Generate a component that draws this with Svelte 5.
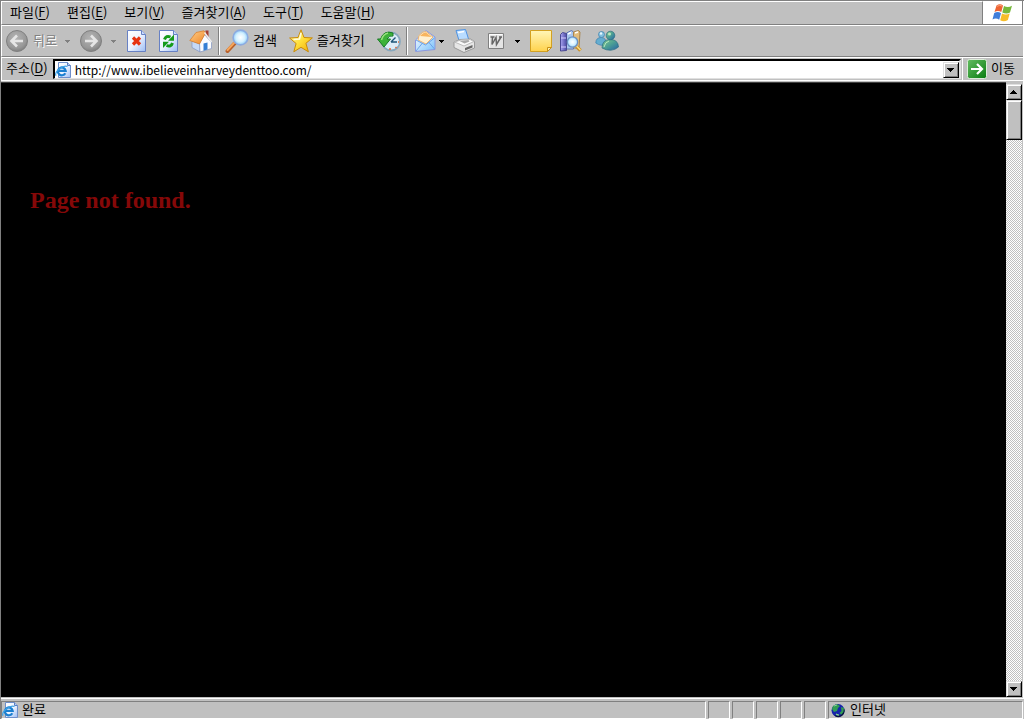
<script>
  const menus = [
    ['파일', 'F'], ['편집', 'E'], ['보기', 'V'],
    ['즐겨찾기', 'A'], ['도구', 'T'], ['도움말', 'H']
  ];
  let url = $state('http://www.ibelieveinharveydenttoo.com/');
</script>

{#snippet caret()}
  <svg class="caret" viewBox="0 0 6 3" aria-hidden="true" shape-rendering="crispEdges"><path d="M0 0h5v1h-1v1h-1v1h-1v-1h-1v-1h-1z" /></svg>
{/snippet}

{#snippet arrow()}
  <svg class="arrow" viewBox="0 0 8 4" aria-hidden="true" shape-rendering="crispEdges"><path d="M0 0h7v1h-1v1h-1v1h-1v1h-1v-1h-1v-1h-1v-1h-1z" /></svg>
{/snippet}

{#snippet pageMark()}
  <svg class="small" viewBox="0 0 16 16" aria-hidden="true">
    <path d="M3.5.5h9l3 3v12h-12z" fill="url(#sheet)" stroke="#6f8fca" />
    <path d="M12.5.5v3h3" fill="#b9cdf5" stroke="#5a7fc0" />
    <path d="M10.300 11.200A3.900 3.900 0 1 1 10.700 8.800H4" fill="none" stroke="#1b7fd0" stroke-width="2.200" />
    <path d="M1 13.800C-1 10 8 2.500 12.500 4.500" fill="none" stroke="#3da2e6" stroke-width="1.200" />
  </svg>
{/snippet}

<svg class="defs" aria-hidden="true">
  <defs>
    <linearGradient id="sheet" x2="1" y2="1"><stop stop-color="#fff" /><stop offset=".5" stop-color="#edf3ff" /><stop offset="1" stop-color="#9bbcf4" /></linearGradient>
    <radialGradient id="disc" cx=".45" cy=".35" r=".65"><stop stop-color="#b4b4b4" /><stop offset=".75" stop-color="#989898" /><stop offset="1" stop-color="#808080" /></radialGradient>
    <linearGradient id="roof" x2="1" y2="1"><stop stop-color="#ffd08a" /><stop offset="1" stop-color="#ef8425" /></linearGradient>
    <radialGradient id="lens"><stop stop-color="#fff" /><stop offset=".6" stop-color="#d5f1ff" /><stop offset="1" stop-color="#8dccf8" /></radialGradient>
    <linearGradient id="gold" x2="1" y2="1"><stop stop-color="#fff9b0" /><stop offset=".5" stop-color="#ffe03c" /><stop offset="1" stop-color="#f0a800" /></linearGradient>
    <linearGradient id="note" x2="0" y2="1"><stop stop-color="#fff6b8" /><stop offset="1" stop-color="#ffd24c" /></linearGradient>
    <linearGradient id="mail" x2="1" y2="1"><stop stop-color="#fff" /><stop offset="1" stop-color="#79c1fa" /></linearGradient>
    <linearGradient id="green" x2="1" y2="1"><stop stop-color="#65bd62" /><stop offset="1" stop-color="#087c10" /></linearGradient>
    <linearGradient id="buddy" x2="1" y2="1"><stop stop-color="#86c98b" /><stop offset=".5" stop-color="#4b9e94" /><stop offset="1" stop-color="#2863a8" /></linearGradient>
    <linearGradient id="book" x2="1"><stop stop-color="#a7a2ef" /><stop offset="1" stop-color="#4c4ba6" /></linearGradient>
  </defs>
</svg>

<div class="browser">
  <header>
    <div class="top">
      <nav class="bar menu" aria-label="메뉴">
        {#each menus as [name, key]}
          <button>{name}(<u>{key}</u>)</button>
        {/each}
      </nav>
      <div class="brand">
        <svg viewBox="0 0 22 20" aria-hidden="true">
          <path d="M4.500 2.500Q8 0 11 2.500L9.300 9Q6 7 2.500 9z" fill="#ed6332" />
          <path d="M12 3Q16 5 20 2.700L18 9.400Q14.500 11.500 10.300 9.400z" fill="#76b83a" />
          <path d="M2.200 10Q6 8 9 10.200L7.200 16.800Q4 14.500.5 16.500z" fill="#3f7edb" />
          <path d="M10 10.600Q14 12.500 17.700 10.500L15.900 17Q12 19.500 8.200 17.300z" fill="#f7bd28" />
          <path d="M5 3.300Q8 1.500 10 3" fill="none" stroke="#f9a37d" />
        </svg>
      </div>
    </div>

    <div class="bar tools" role="toolbar" aria-label="도구 모음">
      <button class="back" disabled>
        <svg viewBox="0 0 24 24" aria-hidden="true"><circle cx="12" cy="12" r="10.500" fill="url(#disc)" stroke="#808080" /><path d="M18 12H7M12 6.500L6.500 12l5.500 5.500" fill="none" stroke="#e6e6e6" stroke-width="2.600" /></svg>
        <span>뒤로</span>{@render caret()}
      </button>
      <button class="forward" disabled aria-label="앞으로">
        <svg viewBox="0 0 24 24" aria-hidden="true"><circle cx="12" cy="12" r="10.500" fill="url(#disc)" stroke="#808080" /><path d="M6 12h11M12 6.500l5.500 5.500-5.500 5.500" fill="none" stroke="#e6e6e6" stroke-width="2.600" /></svg>
        {@render caret()}
      </button>
      <button aria-label="중지">
        <svg viewBox="0 0 24 24" aria-hidden="true"><path d="M2.500 1.500h14l4 4v17h-18z" fill="url(#sheet)" stroke="#6781c4" /><path d="M16.500 1.500v4h4" fill="#cbdcff" stroke="#6781c4" /><path d="M8 8.500l7 7M15 8.500l-7 7" stroke="#e63312" stroke-width="3.200" /></svg>
      </button>
      <button aria-label="새로 고침">
        <svg viewBox="0 0 24 24" aria-hidden="true"><path d="M2.500 1.500h14l4 4v17h-18z" fill="url(#sheet)" stroke="#6781c4" /><path d="M16.500 1.500v4h4" fill="#cbdcff" stroke="#6781c4" /><path d="M7.500 10.500Q9 6 13.500 8" fill="none" stroke="#159b1a" stroke-width="3" /><path d="M11 11.800L17 5.500v6.300z" fill="#159b1a" /><path d="M15.500 14Q14 18.500 9.500 16.500" fill="none" stroke="#159b1a" stroke-width="3" /><path d="M6 12.700h6L6 19z" fill="#159b1a" /></svg>
      </button>
      <button aria-label="홈">
        <svg viewBox="0 0 24 24" aria-hidden="true">
          <path d="M16.500 1.500h3v8h-3z" fill="#a43f31" />
          <path d="M3 12l8 3v8l-8-4.500z" fill="#c6d9f7" stroke="#8193c0" stroke-width=".7" />
          <path d="M10.500 14l5-8.500 7 8v6L11 23z" fill="#fafcff" stroke="#8193c0" stroke-width=".7" />
          <path d="M14.500 14.500l4-1v7l-4 1.200z" fill="#357fd4" />
          <path d="M7 3.500l8-1.700L16.500 4l-6 11L.8 11.500z" fill="url(#roof)" stroke="#d77a25" stroke-width=".7" />
          <path d="M15.500 3.500l7 9.500" stroke="#eee" stroke-width="1.500" />
        </svg>
      </button>
      <i class="rule"></i>
      <button>
        <svg viewBox="0 0 24 24" aria-hidden="true"><path d="M9.500 14.500L2.500 22" stroke="#b8602b" stroke-width="4" stroke-linecap="round" /><path d="M9 14L2.500 21" stroke="#f5a65c" stroke-width="2" stroke-linecap="round" /><circle cx="15.500" cy="8.500" r="7.400" fill="url(#lens)" stroke="#8cabe0" stroke-width="1.600" /></svg>
        <span>검색</span>
      </button>
      <button class="apart">
        <svg viewBox="0 0 24 24" aria-hidden="true"><path d="M12 .8L15 8.500l8.400.4-6.500 5.400 2.500 8.500L12 18.300l-7.200 4.500 2.300-8.300L.6 9l8.400-.5z" fill="url(#gold)" stroke="#c98b0b" stroke-linejoin="round" /><path d="M12 4l-1.500 6-6 .5" fill="none" stroke="#fffce0" stroke-width="1.500" /></svg>
        <span>즐겨찾기</span>
      </button>
      <button class="apart" aria-label="목록">
        <svg viewBox="0 0 24 24" aria-hidden="true"><circle cx="14" cy="12.500" r="9" fill="#dcecf7" stroke="#88a8bd" stroke-width="1.800" /><path d="M14 13l4.500-4.500M14 13h6" stroke="#1e5579" stroke-width="1.400" /><path d="M13 19v2M21 13h1M18.500 18l1 1" stroke="#e46736" stroke-width="1.500" /><path d="M16 4Q7 .5 3.500 10H.5L7 18l6.500-8H10Q12 6 16 7z" fill="#3db239" stroke="#187b25" /><path d="M4.500 11Q6 5 11 4" fill="none" stroke="#9ae181" stroke-width="1.500" /></svg>
      </button>
      <i class="rule"></i>
      <button class="mail" aria-label="메일">
        <svg viewBox="0 0 24 24" aria-hidden="true"><path d="M2.500 11L13 1.500 22 8v12.500l-19.500 2z" fill="url(#mail)" stroke="#8b98df" /><path d="M6 6.500Q10 2 13 2.500L20 8l-7 7-8-4z" fill="#fff0d2" stroke="#e9b474" /><path d="M7 7Q10 3 13 3.500L18.500 8z" fill="#f8b45d" /><path d="M3 11l9.500 5L21.500 9M3 22l6.500-8M21.500 20l-6-7" fill="none" stroke="#6ba3e9" /></svg>
        {@render caret()}
      </button>
      <button aria-label="인쇄">
        <svg viewBox="0 0 24 24" aria-hidden="true"><path d="M4 1.500l9.500-1 3.500 11H7z" fill="#b9dcff" stroke="#4f92e1" /><path d="M6 3.500l6-1" stroke="#fff" stroke-width="1.500" /><path d="M2 13l6-2.500 10.500-.5 4 2.500v6.500L12 23.500 2 18.500z" fill="#e6e6e6" stroke="#999" /><path d="M2.500 13l9.500 4 10-4.500-4-2-9 .5z" fill="#fafafa" stroke="#bbb" /><path d="M13 19l7.500-3v2.500L13 21.500z" fill="#666" /><path d="M7.500 12l9-1 1 1.500-5 2z" fill="#a9a9a9" /></svg>
      </button>
      <button class="word" aria-label="편집">
        <svg viewBox="0 0 24 24" aria-hidden="true"><path d="M4.500 4.500h15v15h-15z" fill="#e4e4e4" stroke="#808080" /><path d="M5.500 18.500v-13h13" fill="none" stroke="#fff" /><path d="M6.500 8h4M8.500 8l-.5 7.500 4-7 .5 7L17 8M15 8h3" fill="none" stroke="#666" stroke-width="1.500" /></svg>
        {@render caret()}
      </button>
      <button aria-label="메모">
        <svg viewBox="0 0 24 24" aria-hidden="true"><path d="M1.500 1.500h21v17l-4 4h-17z" fill="url(#note)" stroke="#d3a121" /><path d="M18.500 22.500v-4h4z" fill="#fff2a5" stroke="#c89016" /></svg>
      </button>
      <button class="books" aria-label="리서치">
        <svg viewBox="0 0 24 24" aria-hidden="true">
          <path d="M7.500 4l5-2.500 2 1.500v17h-7z" fill="#a9c7ef" stroke="#5f74b0" />
          <path d="M14.500 3l5-1.500 1.500 1.500-1 16h-5.500z" fill="#e2bd7c" stroke="#a88550" />
          <path d="M9 5l3-1.500M16 4l3-1" stroke="#fff" stroke-width="1.500" />
          <path d="M1.500 5.500l2-2 4 1v17l-6 .5z" fill="url(#book)" stroke="#4a4992" />
          <path d="M2 9h5M2 18h5" stroke="#d6cfff" />
          <path d="M17.500 17.500l4 4" stroke="#c8912d" stroke-width="3.500" />
          <path d="M17.500 17l4 4" stroke="#ffe083" stroke-width="1.300" />
          <circle cx="13.500" cy="13" r="5.200" fill="url(#lens)" stroke="#6c90c1" stroke-width="1.300" />
        </svg>
      </button>
      <button class="apart" aria-label="메신저">
        <svg viewBox="0 0 24 24" aria-hidden="true">
          <path d="M.8 14q0-5.500 5.500-5.500 5 0 5 6.500-5 3-10.500-1z" fill="#65add0" stroke="#397fae" stroke-width=".7" />
          <circle cx="6.500" cy="5.500" r="3" fill="#83c0de" stroke="#397fae" stroke-width=".7" />
          <path d="M7 19q0-8.500 8.500-8.500 7.500 0 8 7.500-7 6-16.500 1z" fill="url(#buddy)" stroke="#286b80" stroke-width=".7" />
          <circle cx="15.500" cy="6.500" r="4.300" fill="url(#buddy)" stroke="#286b80" stroke-width=".7" />
          <path d="M9 18q1-5 5-6" fill="none" stroke="#b8e8bd" />
          <circle cx="14.500" cy="5" r="1.500" fill="#b8e8bd" /><circle cx="6" cy="4.500" r="1.200" fill="#e5f8ff" />
        </svg>
      </button>
    </div>

    <form class="bar address" onsubmit={(e) => e.preventDefault()}>
      <label for="url">주소(<u>D</u>)</label>
      <div class="field">
        {@render pageMark()}
        <input id="url" type="text" bind:value={url} spellcheck="false" />
        <button type="button" class="bevel" aria-label="주소 목록">{@render arrow()}</button>
      </div>
      <button class="go">
        <svg viewBox="0 0 20 20" aria-hidden="true"><rect x=".5" y=".5" width="19" height="19" rx="2" fill="url(#green)" stroke="#ddecda" /><path d="M4 10h11M10 5l5 5-5 5" fill="none" stroke="#fff" stroke-width="2.200" /></svg>
        <span>이동</span>
      </button>
    </form>
  </header>

  <div class="view">
    <main><h1>Page not found.</h1></main>
    <div class="scroll">
      <button class="bevel up" aria-label="위로">{@render arrow()}</button>
      <div class="bevel thumb"></div>
      <div class="track"></div>
      <button class="bevel" aria-label="아래로">{@render arrow()}</button>
    </div>
  </div>

  <footer>
    <div class="pane message">{@render pageMark()}<span>완료</span></div>
    {#each Array(5) as _}<div class="pane"></div>{/each}
    <div class="pane zone">
      <svg class="small" viewBox="0 0 16 16" aria-hidden="true"><circle cx="8" cy="8.500" r="6.500" fill="#1624aa" /><path d="M3 4l4-2 3 2-2 2-1 3-3 1-2-3zM11 5l3 1 .5 4-3 3-2-2 2-2z" fill="#319c55" /><path d="M4 4l3-1M6 12l3 1-1 1.500z" stroke="#86d390" fill="#319c55" /><path d="M14 6q2 5-2 8-5 3-8-1 6 2 8-1 2-2 2-6z" fill="#071043" /></svg>
      <span>인터넷</span>
    </div>
  </footer>
</div>

<style>
  :global(body) { margin: 0; background: #c0c0c0; }
  * { box-sizing: border-box; }
  .defs { position: absolute; width: 0; height: 0; }
  .browser {
    display: flex; flex-direction: column; height: 100vh;
    font: 13px/16px "Noto Sans CJK KR", sans-serif; color: #000;
    background: #c0c0c0; border: solid #808080; border-width: 1px 0 0 1px;
  }
  button { display: flex; align-items: center; border: 0; padding: 0; margin: 0; background: none; font: inherit; color: inherit; white-space: nowrap; }
  svg { display: block; flex: none; }
  u { text-underline-offset: 2px; }
  span { white-space: nowrap; }
  .small { width: 16px; height: 16px; }
  .caret { width: 6px; height: 3px; fill: #000; }
  .arrow { width: 8px; height: 4px; }
  header { border-right: 1px solid #fff; }
  .top { display: flex; }
  .bar { display: flex; align-items: center; border: solid #fff; border-width: 1px 0 0 1px; border-bottom: 1px solid #808080; }
  .menu { flex: 1; height: 24px; gap: 1px; border-right: 1px solid #808080; }
  .menu button { padding: 0 8px 2px; height: 22px; }
  .brand { width: 40px; background: #fff; border: solid #808080; border-width: 0 1px 1px 0; display: flex; align-items: center; justify-content: center; }
  .brand svg { width: 22px; height: 20px; }
  .tools { height: 32px; padding-left: 3px; }
  .tools button { height: 28px; gap: 4px; padding: 0 4px; }
  .tools button svg:first-child { width: 24px; height: 24px; }
  .tools span { padding-bottom: 2px; }
  .tools .back { padding: 0; }
  .back .caret { margin-left: 4px; }
  .tools .forward { padding: 0 4px 0 8px; gap: 8px; }
  .tools button:disabled { color: #808080; text-shadow: 1px 1px #fff; }
  button:disabled .caret { fill: #808080; }
  .rule { width: 2px; height: 28px; margin: 0 1px; flex: none; background: linear-gradient(90deg, #808080 50%, #fff 50%); }
  .tools .apart { margin-left: 4px; }
  .tools .mail { gap: 2px; padding-right: 3px; }
  .tools .word { gap: 7px; }
  .tools .books { margin-left: -2px; }
  .address { height: 23px; padding-left: 4px; gap: 5px; border-bottom: 0; }
  .address label, .go span { padding-bottom: 2px; }
  .field { flex: 1; min-width: 0; height: 20px; display: flex; align-items: center; background: #fff; border: solid; border-width: 2px 2px 1px; border-color: #000 #e0e0e0 #e0e0e0 #000; }
  .field input { flex: 1; min-width: 0; height: 17px; padding: 0 4px; border: 0; outline: 0; background: none; font: inherit; font-size: 12px; color: inherit; }
  .bevel { flex: none; width: 16px; height: 16px; justify-content: center; background: #c0c0c0; border: 1px solid; border-color: #dfdfdf #000 #000 #dfdfdf; box-shadow: inset 1px 1px #fff, inset -1px -1px #808080; }
  .go { height: 22px; gap: 4px; padding: 0 8px 0 4px; margin-left: -4px; border-left: 1px solid #fff; }
  .go svg { width: 20px; height: 20px; }
  .view { flex: 1; min-height: 0; display: flex; border: solid #fff; border-width: 1px 1px 1px 0; padding: 1px 1px 1px 0; }
  main { flex: 1; padding: 103px 29px 0; background: #000; overflow: hidden; border-top: 1px solid #404040; }
  h1 { margin: 0; font: bold 24px/28px "Liberation Serif", serif; color: #850808; }
  .scroll { display: flex; flex-direction: column; width: 16px; padding-top: 2px; }
  .up .arrow { transform: scaleY(-1); }
  .thumb { height: 40px; }
  .track { flex: 1; background: repeating-conic-gradient(#fff 0 25%, #c0c0c0 0 50%) 0 0 / 2px 2px; }
  footer { display: flex; gap: 2px; height: 20px; padding: 2px 1px 0 0; }
  .pane { display: flex; align-items: center; width: 22px; border: 1px solid; border-color: #808080 #fff #fff #808080; }
  .pane span { padding-bottom: 2px; }
  .message { flex: 1; gap: 4px; }
  .zone { width: 195px; padding-left: 1px; gap: 4px; }
</style>
